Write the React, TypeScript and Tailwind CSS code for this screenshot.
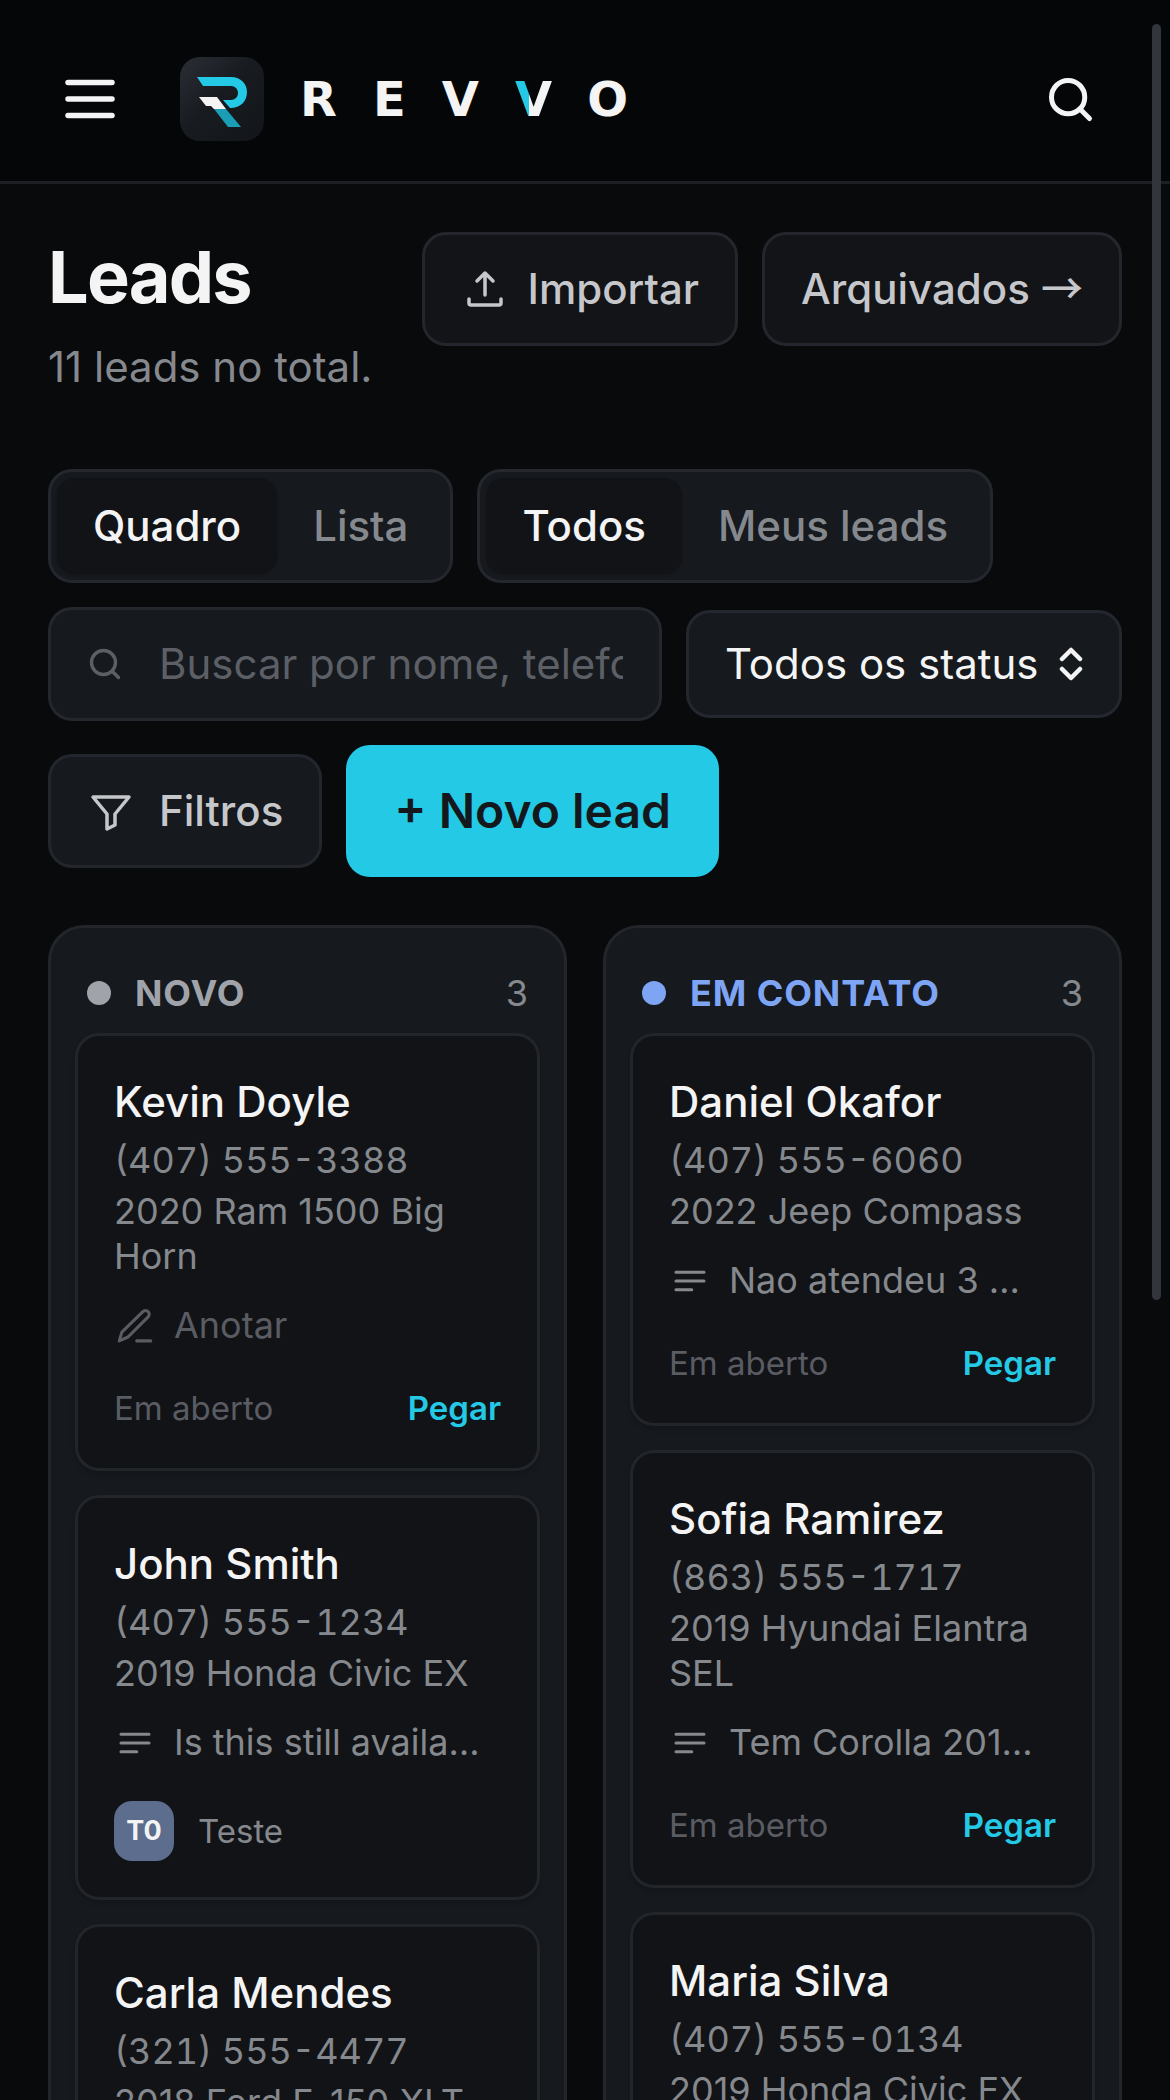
import { useState } from 'react';
import { Search } from 'lucide-react';

type Lead = {
  name: string;
  phone: string;
  vehicle: string;
  note?: string;
  owner?: { initials: string; name: string };
};

type Column = {
  id: string;
  title: string;
  dotClass: string;
  titleClass: string;
  leads: Lead[];
};

const columns: Column[] = [
  {
    id: 'novo',
    title: 'NOVO',
    dotClass: 'bg-[#a0a3a9]',
    titleClass: 'text-[#a0a3a9]',
    leads: [
      { name: 'Kevin Doyle', phone: '(407) 555-3388', vehicle: '2020 Ram 1500 Big Horn' },
      {
        name: 'John Smith',
        phone: '(407) 555-1234',
        vehicle: '2019 Honda Civic EX',
        note: 'Is this still availa…',
        owner: { initials: 'T0', name: 'Teste' },
      },
      { name: 'Carla Mendes', phone: '(321) 555-4477', vehicle: '2018 Ford F-150 XLT' },
    ],
  },
  {
    id: 'em-contato',
    title: 'EM CONTATO',
    dotClass: 'bg-[#7ea4f4]',
    titleClass: 'text-[#7ea4f4]',
    leads: [
      { name: 'Daniel Okafor', phone: '(407) 555-6060', vehicle: '2022 Jeep Compass', note: 'Nao atendeu 3 …' },
      { name: 'Sofia Ramirez', phone: '(863) 555-1717', vehicle: '2019 Hyundai Elantra SEL', note: 'Tem Corolla 201…' },
      { name: 'Maria Silva', phone: '(407) 555-0134', vehicle: '2019 Honda Civic EX' },
    ],
  },
];

const iconProps = {
  viewBox: '0 0 24 24',
  fill: 'none',
  stroke: 'currentColor',
  strokeLinecap: 'round',
  strokeLinejoin: 'round',
  'aria-hidden': true,
} as const;

function MenuIcon() {
  return (
    <svg {...iconProps} strokeWidth={2} className="size-[66px]">
      <path d="M4 6h16M4 12h16M4 18h16" />
    </svg>
  );
}

function HeaderSearchIcon() {
  return (
    <svg {...iconProps} strokeWidth={2.1} className="size-[57px]">
      <circle cx="11" cy="11" r="7" />
      <path d="M20 20l-4-4" />
    </svg>
  );
}

function UploadIcon() {
  return (
    <svg {...iconProps} strokeWidth={1.75} className="size-12">
      <path d="M12 15V4M8 8l4-4 4 4M4 17v2a1 1 0 0 0 1 1h14a1 1 0 0 0 1-1v-2" />
    </svg>
  );
}

function FilterIcon() {
  return (
    <svg {...iconProps} strokeWidth={1.75} className="size-12">
      <path d="M3 5h18l-7 8.5V19l-4 2v-7.5z" />
    </svg>
  );
}

function NoteIcon() {
  return (
    <svg {...iconProps} strokeWidth={1.75} className="size-[42px] shrink-0">
      <path d="M4 7h16M4 12h16M4 17h9" />
    </svg>
  );
}

function PencilIcon() {
  return (
    <svg {...iconProps} strokeWidth={1.75} className="size-[42px] shrink-0">
      <path d="M13 20.5h8M16.5 3.8a2.1 2.1 0 0 1 3 3L8 18.3 3 20.5l1.5-5z" />
    </svg>
  );
}

function SortIcon() {
  return (
    <svg
      viewBox="0 0 24 36"
      fill="none"
      stroke="currentColor"
      strokeWidth={4.5}
      strokeLinecap="round"
      strokeLinejoin="round"
      aria-hidden
      className="pointer-events-none absolute top-1/2 right-[39px] h-9 w-6 -translate-y-1/2 text-[#f4f4f5]"
    >
      <path d="M3 13l9-9 9 9M3 23l9 9 9-9" />
    </svg>
  );
}

function LogoMark() {
  return (
    <svg viewBox="0 0 84 84" className="size-[84px]" aria-hidden>
      <defs>
        <linearGradient id="mark-bg" x1="0" y1="0" x2="1" y2="1">
          <stop offset="0" stopColor="#2b2e35" />
          <stop offset="0.45" stopColor="#181b20" />
          <stop offset="1" stopColor="#121519" />
        </linearGradient>
      </defs>
      <rect width="84" height="84" rx="20" fill="url(#mark-bg)" />
      <path d="M17 20H51C61 20 67 27 67 35C67 44 61 51 50 51L43 43H51C55 43 58 40 58 36C58 32 55 29 51 29H23Z" fill="#24cae5" />
      <path d="M19 40H37L46 52H34L31 49H26Z" fill="#f4f4f5" />
      <path d="M34 52H46L61 70H48Z" fill="#1a9db5" />
    </svg>
  );
}

function Segmented({ label, options }: { label: string; options: string[] }) {
  const [active, setActive] = useState(options[0]);

  return (
    <div role="group" aria-label={label} className="flex rounded-3xl border-3 border-[#24272d] bg-[#16191d] p-1.5">
      {options.map((option) => (
        <button
          key={option}
          type="button"
          aria-pressed={active === option}
          onClick={() => setActive(option)}
          className={
            active === option
              ? 'h-24 rounded-[18px] bg-[#121317] px-9 font-medium text-[#f4f4f5] shadow-sm'
              : 'h-24 rounded-[18px] px-9 font-medium text-[#85898e]'
          }
        >
          {option}
        </button>
      ))}
    </div>
  );
}

function LeadCard({ lead }: { lead: Lead }) {
  return (
    <article className="rounded-3xl border-3 border-[#22252a] bg-[#121317] p-9 text-4xl/[45px] text-[#85898d] shadow-md">
      <h3 className="text-[42px]/[60px] font-medium text-[#f4f4f5]">{lead.name}</h3>
      <p className="mt-1.5 tabular-nums">{lead.phone}</p>
      <p className="mt-1.5">{lead.vehicle}</p>
      {lead.note ? (
        <button type="button" className="mt-6 flex items-center gap-[18px]">
          <NoteIcon />
          <span className="whitespace-nowrap">{lead.note}</span>
        </button>
      ) : (
        <button type="button" className="mt-6 flex items-center gap-[18px] text-[#5a5c63]">
          <PencilIcon />
          Anotar
        </button>
      )}
      {lead.owner ? (
        <div className="mt-9 flex items-center gap-6 text-[33px]/[48px]">
          <span className="flex size-[60px] items-center justify-center rounded-[18px] bg-[#5d6d8e] text-[27px] font-bold text-[#f4f4f5]">
            {lead.owner.initials}
          </span>
          {lead.owner.name}
        </div>
      ) : (
        <div className="mt-9 flex items-center justify-between text-[33px]/[48px]">
          <span className="text-[#5a5c63]">Em aberto</span>
          <button type="button" className="font-semibold text-[#24cae5]">
            Pegar
          </button>
        </div>
      )}
    </article>
  );
}

export default function App() {
  const [search, setSearch] = useState('');

  return (
    <div className="relative h-screen overflow-hidden bg-[#090a0c] font-['Inter','Liberation_Sans',sans-serif] text-[42px]/[60px] text-[#f4f4f5]">
      <div className="h-full overflow-y-auto [scrollbar-width:none]">
        <header className="flex items-center gap-9 border-b-3 border-[#1d1f25] bg-[#050608] px-9 pt-[27px] pb-[10px]">
          <button type="button" aria-label="Menu" className="flex h-36 w-[108px] items-center justify-center">
            <MenuIcon />
          </button>
          <a href="#" className="flex items-center gap-9">
            <LogoMark />
            <span className="font-['DejaVu_Sans',sans-serif] text-5xl font-bold tracking-[0.75em]">
              REV
              <span className="bg-linear-to-r from-[#24cae5] from-20% to-[#f4f4f5] to-20% bg-clip-text text-transparent">V</span>O
            </span>
          </a>
          <button type="button" aria-label="Buscar" className="ml-auto flex h-36 w-32 items-center justify-center">
            <HeaderSearchIcon />
          </button>
        </header>

        <main className="px-12 pt-12">
          <div className="flex items-start justify-between gap-6">
            <div>
              <h1 className="text-7xl/[90px] font-bold tracking-tight">Leads</h1>
              <p className="mt-[15px] text-[#85898e]">11 leads no total.</p>
            </div>
            <div className="flex gap-6 font-medium text-[#c6c7cb]">
              <button type="button" className="flex h-[114px] items-center gap-[18px] rounded-3xl border-3 border-[#24262d] bg-[#121418] px-9">
                <UploadIcon />
                Importar
              </button>
              <a href="#" className="flex h-[114px] items-center rounded-3xl border-3 border-[#24262d] bg-[#121418] px-9">
                <span>
                  Arquivados <span className="font-['Noto_Sans_CJK_JP',sans-serif] leading-none">→</span>
                </span>
              </a>
            </div>
          </div>

          <div className="mt-[72px] flex flex-wrap items-center gap-6">
            <Segmented label="Visualização" options={['Quadro', 'Lista']} />
            <Segmented label="Responsável" options={['Todos', 'Meus leads']} />
            <label className="flex h-[114px] min-w-0 flex-[1_1_400px] items-center gap-9 rounded-3xl border-3 border-[#24272d] bg-[#16191d] px-9 text-[#5c6066]">
              <Search className="size-9 shrink-0" strokeWidth={2.25} />
              <input
                type="text"
                aria-label="Buscar leads"
                value={search}
                onChange={(e) => setSearch(e.target.value)}
                placeholder="Buscar por nome, telefone"
                className="w-full min-w-0 bg-transparent text-[#f4f4f5] outline-none placeholder:text-[#5c6066]"
              />
            </label>
            <div className="relative">
              <select
                aria-label="Status"
                className="h-[108px] appearance-none rounded-3xl border-3 border-[#24272d] bg-[#16191d] pr-20 pl-9 text-[#f4f4f5]"
              >
                <option>Todos os status</option>
                <option>Novo</option>
                <option>Em contato</option>
              </select>
              <SortIcon />
            </div>
            <button
              type="button"
              className="flex h-[114px] items-center gap-6 rounded-3xl border-3 border-[#24262d] bg-[#16191d] px-9 font-medium text-[#c6c7cb]"
            >
              <FilterIcon />
              Filtros
            </button>
            <button type="button" className="h-[132px] rounded-3xl bg-[#24cae5] px-12 text-5xl font-semibold text-[#14181d]">
              + Novo lead
            </button>
          </div>

          <div className="mt-12 grid grid-cols-2 items-start gap-9">
            {columns.map((column) => (
              <section key={column.id} className="rounded-[36px] border-3 border-[#22252a] bg-[#16191d] px-6 pt-6 pb-6">
                <div className="flex h-[81px] items-center px-3 text-4xl">
                  <span className={`mr-6 size-6 rounded-full ${column.dotClass}`} />
                  <h2 className={`font-bold tracking-wide ${column.titleClass}`}>{column.title}</h2>
                  <span className="ml-auto text-[#85898d]">{column.leads.length}</span>
                </div>
                <div className="flex flex-col gap-6">
                  {column.leads.map((lead) => (
                    <LeadCard key={lead.name} lead={lead} />
                  ))}
                </div>
              </section>
            ))}
          </div>
        </main>
      </div>

      {/* scroll thumb */}
      <div className="absolute top-6 right-[9px] h-[1276px] w-[9px] rounded-full bg-[#32353c]" />
    </div>
  );
}
